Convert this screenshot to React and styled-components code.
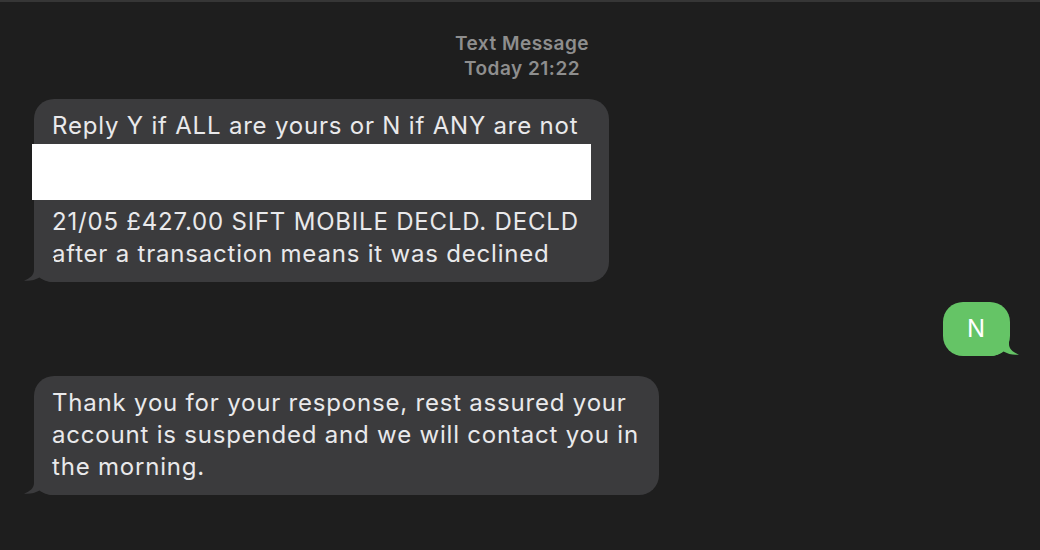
import React from 'react';
import styled, { createGlobalStyle } from 'styled-components';

const GlobalStyle = createGlobalStyle`
  html, body {
    margin: 0;
    padding: 0;
    background: #1e1e1e;
  }
  * { box-sizing: border-box; }
`;

const Window = styled.div`
  width: 1040px;
  height: 550px;
  overflow: hidden;
  background: #1e1e1e;
  border-top: 2px solid #363636;
  font-family: Inter, "Liberation Sans", sans-serif;
  -webkit-font-smoothing: antialiased;
`;

const Header = styled.div`
  display: flex;
  flex-direction: column;
  align-items: center;
  padding: 29px 0 0 4px;
  color: #8e8e8e;
  font-size: 19px;
  font-weight: 600;
  letter-spacing: 0.5px;
  line-height: 25px;
`;

const Thread = styled.div`
  display: flex;
  flex-direction: column;
  gap: 20px;
  padding: 18px 30px 0 34px;
`;

const Row = styled.div`
  display: flex;
  justify-content: ${p => (p.$mine ? 'flex-end' : 'flex-start')};
`;

const Bubble = styled.div`
  position: relative;
  width: ${p => (p.$width ? `${p.$width}px` : 'auto')};
  min-width: 67px;
  padding: ${p => (p.$mine ? '11px 24px' : '11px 18px 12px')};
  border-radius: 20px;
  background: ${p => (p.$mine ? '#65c466' : '#3b3b3d')};
  color: ${p => (p.$mine ? '#ffffff' : '#e9e9eb')};
  font-size: 24px;
  letter-spacing: 0.8px;
  line-height: 32px;
  text-align: ${p => (p.$mine ? 'center' : 'left')};
  white-space: nowrap;
`;

const Line = styled.div`
  height: 32px;
`;

const Redaction = styled.div`
  position: absolute;
  left: -2px;
  top: 45px;
  width: 559px;
  height: 56px;
  background: #ffffff;
`;

const TailSvg = styled.svg`
  position: absolute;
  bottom: 0;
  width: 30px;
  height: 24px;
  ${p => (p.$mine ? 'right: -9px; transform: scaleX(-1);' : 'left: -10px;')}
`;

function Tail({ mine }) {
  return (
    <TailSvg $mine={mine} viewBox="0 0 30 24">
      <path
        d="M10 0 L10 12 C10 17 6 20.5 0 22.5 C5 23.5 11 22 15.5 19.5 C19 22 23 24 30 24 L30 0 Z"
        fill={mine ? '#65c466' : '#3b3b3d'}
      />
    </TailSvg>
  );
}

export default function App() {
  return (
    <>
      <GlobalStyle />
      <Window>
        <Header>
          <span>Text Message</span>
          <span>Today 21:22</span>
        </Header>
        <Thread>
          <Row>
            <Bubble $width={575}>
              <Line>Reply Y if ALL are yours or N if ANY are not</Line>
              <Line />
              <Line />
              <Line>21/05 £427.00 SIFT MOBILE DECLD. DECLD</Line>
              <Line>after a transaction means it was declined</Line>
              <Redaction />
              <Tail />
            </Bubble>
          </Row>
          <Row $mine>
            <Bubble $mine>
              N
              <Tail mine />
            </Bubble>
          </Row>
          <Row>
            <Bubble $width={625}>
              <Line>Thank you for your response, rest assured your</Line>
              <Line>account is suspended and we will contact you in</Line>
              <Line>the morning.</Line>
              <Tail />
            </Bubble>
          </Row>
        </Thread>
      </Window>
    </>
  );
}
